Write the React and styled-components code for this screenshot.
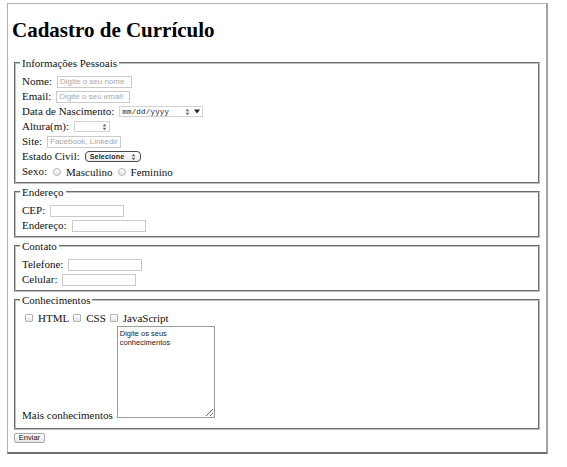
import styled, { createGlobalStyle } from "styled-components";

const GlobalStyle = createGlobalStyle`
  body {
    margin: 0;
    background: #fff;
  }
`;

const Window = styled.div`
  box-sizing: border-box;
  width: 541px;
  margin: 3px 0 0 7px;
  padding: 0 4px 9px;
  border: 1px solid #b4b4b4;
  border-right: 2px solid #a2a2a2;
  border-bottom: 2px solid #707070;
  box-shadow: 0 1px 1px rgba(0, 0, 0, 0.15);
  font-family: "Liberation Serif", "Times New Roman", serif;
  font-size: 11px;
  color: #111;
`;

const Title = styled.h1`
  margin: 14px 0 15px;
  font-size: 21px;
  line-height: 24px;
  font-weight: bold;
  color: #000;
`;

const Section = styled.fieldset`
  margin: 0 2px 2px;
  padding: 5px 6px ${(p) => p.$pb || 3}px;
  border: 2px groove #c0c0c0;
  min-width: 0;
`;

const Legend = styled.legend`
  padding: 0 2px;
  margin-left: -2px;
  line-height: 12px;
`;

const Row = styled.div`
  display: flex;
  align-items: center;
  gap: ${(p) => p.$gap || 5}px;
  height: ${(p) => p.$h || 15}px;
`;

const Label = styled.label`
  line-height: 12px;
  margin-bottom: 2px;
  white-space: nowrap;
`;

const TextInput = styled.input`
  box-sizing: border-box;
  width: ${(p) => p.$w || 74}px;
  height: 12px;
  margin: 0;
  padding: 0 2px;
  border: 1px solid #cacaca;
  outline: none;
  font: 8px "Liberation Sans", Arial, sans-serif;
  color: #222;
  &::placeholder {
    color: #a8a8a8;
  }
`;

const Field = styled.span`
  box-sizing: border-box;
  display: inline-flex;
  align-items: center;
  width: ${(p) => p.$w}px;
  height: 11px;
  padding: 0 2px;
  border: 1px solid #d2d2d2;
  font: 7.5px "Liberation Mono", "Courier New", monospace;
  color: #222;
`;

const FieldText = styled.span`
  flex: 1;
  letter-spacing: 0.2px;
`;

const Arrow = styled.svg`
  display: block;
  margin-left: ${(p) => p.$ml || 0}px;
  flex: none;
`;

const SelectBox = styled.span`
  box-sizing: border-box;
  display: inline-flex;
  align-items: center;
  width: 56px;
  height: 11px;
  padding: 0 4px;
  border: 1px solid #4a4a4a;
  border-radius: 4px;
  background: linear-gradient(#ffffff, #ececec);
  font: bold 7px "Liberation Sans", Arial, sans-serif;
  color: #222;
`;

const Choice = styled.label`
  display: inline-flex;
  align-items: center;
  gap: 5px;
  margin-left: ${(p) => p.$ml || 0}px;
  line-height: 12px;
  white-space: nowrap;
`;

const Tick = styled.input`
  appearance: none;
  box-sizing: border-box;
  width: 8px;
  height: 8px;
  margin: 0;
  border: 1px solid #b3b3b3;
  border-radius: ${(p) => (p.type === "radio" ? "50%" : "1px")};
  background: linear-gradient(#ffffff, #e4e4e4);
`;

const AreaRow = styled.div`
  display: flex;
  align-items: flex-end;
  gap: 4px;
`;

const Area = styled.textarea`
  box-sizing: border-box;
  width: 98px;
  height: 92px;
  margin: 2px 0 5px;
  padding: 2px;
  border: 1px solid #9a9a9a;
  outline: none;
  font: 7.5px/9px "Liberation Sans", Arial, sans-serif;
  color: #222;
  &::placeholder {
    color: #222;
  }
`;

const Button = styled.button`
  display: block;
  box-sizing: border-box;
  margin: 3px 0 0 2px;
  width: 31px;
  height: 10px;
  padding: 0;
  border: 1px solid #a9a9a9;
  border-radius: 2px;
  background: linear-gradient(#ffffff, #e6e6e6);
  font: 7.5px/8px "Liberation Sans", Arial, sans-serif;
  color: #111;
`;

function Spinner({ ml }) {
  return (
    <Arrow $ml={ml} width="5" height="8" viewBox="0 0 5 8">
      <path d="M2.5 0.8 L4.4 3.2 L0.6 3.2 Z" fill="#666" />
      <path d="M0.6 4.8 L4.4 4.8 L2.5 7.2 Z" fill="#666" />
    </Arrow>
  );
}

function Drop({ ml }) {
  return (
    <Arrow $ml={ml} width="6" height="5" viewBox="0 0 6 5">
      <path d="M0 0.5 L6 0.5 L3 4.5 Z" fill="#222" />
    </Arrow>
  );
}

export default function App() {
  return (
    <>
      <GlobalStyle />
      <Window>
        <Title>Cadastro de Currículo</Title>
        <form>
          <Section>
            <Legend>Informações Pessoais</Legend>
            <Row>
              <Label>Nome:</Label>
              <TextInput $w={75} placeholder="Digite o seu nome" />
            </Row>
            <Row>
              <Label>Email:</Label>
              <TextInput placeholder="Digite o seu email" />
            </Row>
            <Row>
              <Label>Data de Nascimento:</Label>
              <Field $w={84}>
                <FieldText>mm/dd/yyyy</FieldText>
                <Spinner />
                <Drop ml={4} />
              </Field>
            </Row>
            <Row>
              <Label>Altura(m):</Label>
              <Field $w={36}>
                <FieldText />
                <Spinner />
              </Field>
            </Row>
            <Row>
              <Label>Site:</Label>
              <TextInput placeholder="Facebook, Linkedin, Github" />
            </Row>
            <Row>
              <Label>Estado Civil:</Label>
              <SelectBox>
                <FieldText>Selecione</FieldText>
                <Spinner />
              </SelectBox>
            </Row>
            <Row>
              <Label>Sexo:</Label>
              <Choice $ml={1}>
                <Tick type="radio" name="sexo" />
                Masculino
              </Choice>
              <Choice>
                <Tick type="radio" name="sexo" />
                Feminino
              </Choice>
            </Row>
          </Section>

          <Section>
            <Legend>Endereço</Legend>
            <Row>
              <Label>CEP:</Label>
              <TextInput />
            </Row>
            <Row>
              <Label>Endereço:</Label>
              <TextInput />
            </Row>
          </Section>

          <Section>
            <Legend>Contato</Legend>
            <Row>
              <Label>Telefone:</Label>
              <TextInput />
            </Row>
            <Row>
              <Label>Celular:</Label>
              <TextInput />
            </Row>
          </Section>

          <Section $pb={5}>
            <Legend>Conhecimentos</Legend>
            <Row $h={13} $gap={4}>
              <Choice $ml={3}>
                <Tick type="checkbox" />
                HTML
              </Choice>
              <Choice>
                <Tick type="checkbox" />
                CSS
              </Choice>
              <Choice>
                <Tick type="checkbox" />
                JavaScript
              </Choice>
            </Row>
            <AreaRow>
              <Label>Mais conhecimentos</Label>
              <Area placeholder="Digite os seus conhecimentos" />
            </AreaRow>
          </Section>

          <Button type="button">Enviar</Button>
        </form>
      </Window>
    </>
  );
}
